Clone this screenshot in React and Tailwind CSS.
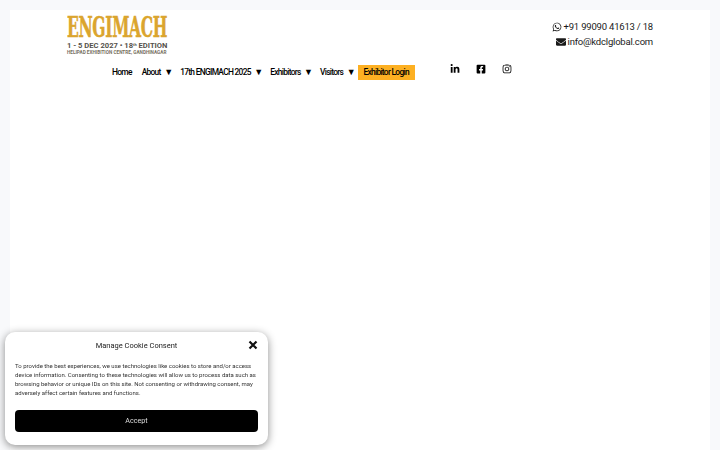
import React from 'react';
import { FaWhatsapp, FaEnvelope, FaLinkedinIn, FaFacebookSquare, FaInstagram } from 'react-icons/fa';

const NavItem = ({ label, caret }) => (
  <a className="flex items-center text-[8.4px] font-medium text-black whitespace-nowrap tracking-[-0.7px]">
    {label}
    {caret && <span className="ml-[3.5px] w-[6px] text-[9px] leading-none">▼</span>}
  </a>
);

const App = () => {
  return (
    <div className="h-[450px] overflow-hidden bg-[#f8f9fb] px-[10px] pt-[10px] font-['Roboto',sans-serif]">
      <div className="h-full bg-white">
        {/* header */}
        <div className="flex h-[52px]">
          <div className="ml-[57px] mt-[5px] w-[102px]">
            <div className="origin-left scale-x-[0.575] font-['DejaVu_Serif',serif] text-[27px] leading-[26px] font-black tracking-[-0.6px] text-[#dba52e] [-webkit-text-stroke:0.5px_#dba52e] whitespace-nowrap">ENGIMACH</div>
            <div className="text-[7.6px] leading-[8px] mt-[1px] font-bold text-[#55514b] whitespace-nowrap">1 - 5 DEC 2027 • 18<sup className="text-[4px]">th</sup> EDITION</div>
            <div className="text-[4.7px] leading-[6px] font-bold text-[#77705f] whitespace-nowrap">HELIPAD EXHIBITION CENTRE, GANDHINAGAR</div>
          </div>
          <div className="ml-auto mr-[57px] mt-[9px] flex flex-col items-end text-[9.5px] leading-[15px] tracking-[-0.2px] text-[#1a1a1a]">
            <div className="flex items-center gap-[2px]"><FaWhatsapp size={10} /> +91 99090 41613 / 18</div>
            <div className="flex items-center gap-[2px]"><FaEnvelope size={10} /> info@kdclglobal.com</div>
          </div>
        </div>
        {/* nav */}
        <div className="flex items-start">
          <div className="ml-[102px] mt-[3px] flex items-center">
            <NavItem label="Home" />
            <div className="ml-[10px]"><NavItem label="About" caret /></div>
            <div className="ml-[10px]"><NavItem label="17th ENGIMACH 2025" caret /></div>
            <div className="ml-[10px]"><NavItem label="Exhibitors" caret /></div>
            <div className="ml-[10px]"><NavItem label="Visitors" caret /></div>
            <a className="ml-[5px] flex h-[15px] w-[57px] items-center justify-center bg-[#fdb022] text-[8.4px] font-medium tracking-[-0.7px] text-black whitespace-nowrap">Exhibitor Login</a>
          </div>
          <div className="ml-[35px] flex items-center gap-[16px] pt-[2px] text-black">
            <FaLinkedinIn size={10} />
            <FaFacebookSquare size={10} />
            <FaInstagram size={10} />
          </div>
        </div>
      </div>
      {/* cookie banner */}
      <div className="fixed bottom-[5px] left-[5px] h-[113px] w-[263px] rounded-[10px] bg-white px-[10px] shadow-[0_2px_8px_rgba(0,0,0,0.45)]">
        <div className="relative pt-[8px] text-center text-[7.5px] leading-[12px] text-[#222]">
          Manage Cookie Consent
          <svg className="absolute right-0 top-[8px]" width="10" height="10" viewBox="0 0 10 10">
            <path d="M1.5 1.5L8.5 8.5M8.5 1.5L1.5 8.5" stroke="#111" strokeWidth="2.2" />
          </svg>
        </div>
        <p className="mt-[9px] text-[6px] leading-[9px] text-[#333]">
          To provide the best experiences, we use technologies like cookies to store and/or access device information. Consenting to these technologies will allow us to process data such as browsing behavior or unique IDs on this site. Not consenting or withdrawing consent, may adversely affect certain features and functions.
        </p>
        <button className="mt-[13px] flex h-[22px] w-full items-center justify-center rounded-[4px] bg-black pt-[1px] text-[7.2px] text-[#ddd]">Accept</button>
      </div>
    </div>
  );
};

export default App;
